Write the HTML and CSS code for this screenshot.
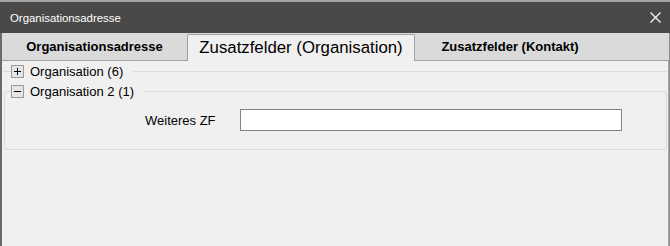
FILE: index.html
```html
<!DOCTYPE html>
<html lang="de">
<head>
  <meta charset="UTF-8">
  <title>Organisationsadresse</title>
  <link rel="stylesheet" href="styles.css">
</head>
<body>
  <div class="titlebar">
    <span class="title">Organisationsadresse</span>
    <button class="close" aria-label="Schließen">
      <svg width="11" height="11" viewBox="0 0 11 11">
        <path d="M0.5 0.5 L10.5 10.5 M10.5 0.5 L0.5 10.5" stroke="#fff" stroke-width="1.1" fill="none"/>
      </svg>
    </button>
  </div>

  <div class="frame">
    <div class="tabstrip">
      <div class="tab tab-first">Organisationsadresse</div>
      <div class="tab tab-active">Zusatzfelder (Organisation)</div>
      <div class="tab tab-last">Zusatzfelder (Kontakt)</div>
    </div>

    <div class="page">
      <fieldset class="group collapsed">
        <legend class="group-head">
          <span class="toggle plus"></span>
          <span class="group-label">Organisation (6)</span>
        </legend>
      </fieldset>

      <fieldset class="group">
        <legend class="group-head">
          <span class="toggle"></span>
          <span class="group-label">Organisation 2 (1)</span>
        </legend>
        <div class="field">
          <label for="weiteres-zf">Weiteres ZF</label>
          <input type="text" id="weiteres-zf">
        </div>
      </fieldset>
    </div>
  </div>
</body>
</html>
```

FILE: styles.css
```css
html, body {
  height: 100%;
}

body {
  margin: 0;
  font-family: "Liberation Sans", Arial, sans-serif;
  background: #f0f0f0;
  color: #000;
  display: flex;
  flex-direction: column;
  overflow: hidden;
}

.titlebar {
  height: 31px;
  border-top: 2px solid #a4a4a4;
  background: #4a4947;
  display: flex;
  align-items: center;
  justify-content: space-between;
  padding: 0 9px 0 10px;
  flex-shrink: 0;
}

.title {
  color: #fff;
  font-size: 11.4px;
}

.close {
  background: none;
  border: none;
  padding: 0;
  width: 11px;
  height: 11px;
  display: flex;
}

.frame {
  flex: 1;
  display: flex;
  flex-direction: column;
  border-left: 2px solid #6a6a6a;
  border-right: 1px solid #8a8a8a;
}

.tabstrip {
  height: 27px;
  background: #dadada;
  border-bottom: 1px solid #a0a0a0;
  display: flex;
  align-items: flex-start;
}

.tab {
  height: 27px;
  line-height: 27px;
  text-align: center;
  font-size: 13px;
  font-weight: bold;
  box-sizing: border-box;
}

.tab-first {
  width: 185px;
}

.tab-active {
  width: 228px;
  height: 27px;
  margin-top: 1px;
  line-height: 25px;
  background: #f0f0f0;
  border: 1px solid #a0a0a0;
  border-bottom: none;
  border-radius: 2px 2px 0 0;
  font-size: 16.8px;
  font-weight: normal;
}

.tab-last {
  width: 190px;
}

.page {
  flex: 1;
  background: #f0f0f0;
  border-right: 1px solid #a8a8a8;
  padding: 3px 0 0 2px;
}

.group {
  margin: 0;
  padding: 0;
  border: 1px solid #d3dde4;
  border-radius: 3px;
}

.group.collapsed {
  border-width: 1px 0 0 0;
  border-radius: 0;
  margin-left: -1px;
  margin-right: 1px;
}

.group + .group {
  margin-top: 5px;
  margin-right: 1px;
  padding: 10px 0 18px;
}

.group-head {
  margin-left: 6px;
  padding: 0 10px 0 0;
  height: 15px;
  display: flex;
  align-items: center;
}

.collapsed .group-head {
  margin-left: 8px;
}

.toggle {
  position: relative;
  width: 11px;
  height: 11px;
  border: 1px solid #9a9a9a;
  background: #e5e5e5;
  margin-right: 6px;
}

.toggle::before {
  content: "";
  position: absolute;
  left: 2px;
  top: 5px;
  width: 7px;
  height: 1px;
  background: #000;
}

.plus::after {
  content: "";
  position: absolute;
  left: 5px;
  top: 2px;
  width: 1px;
  height: 7px;
  background: #000;
}

.group-label {
  font-size: 13px;
  line-height: 15px;
}

.field {
  display: flex;
  align-items: center;
  padding-left: 140px;
}

.field label {
  width: 95px;
  font-size: 13px;
}

.field input {
  width: 382px;
  height: 22px;
  box-sizing: border-box;
  border: 1px solid #828282;
  background: #fff;
  margin: 0;
  padding: 2px 4px;
  font: 13px "Liberation Sans", Arial, sans-serif;
}
```
